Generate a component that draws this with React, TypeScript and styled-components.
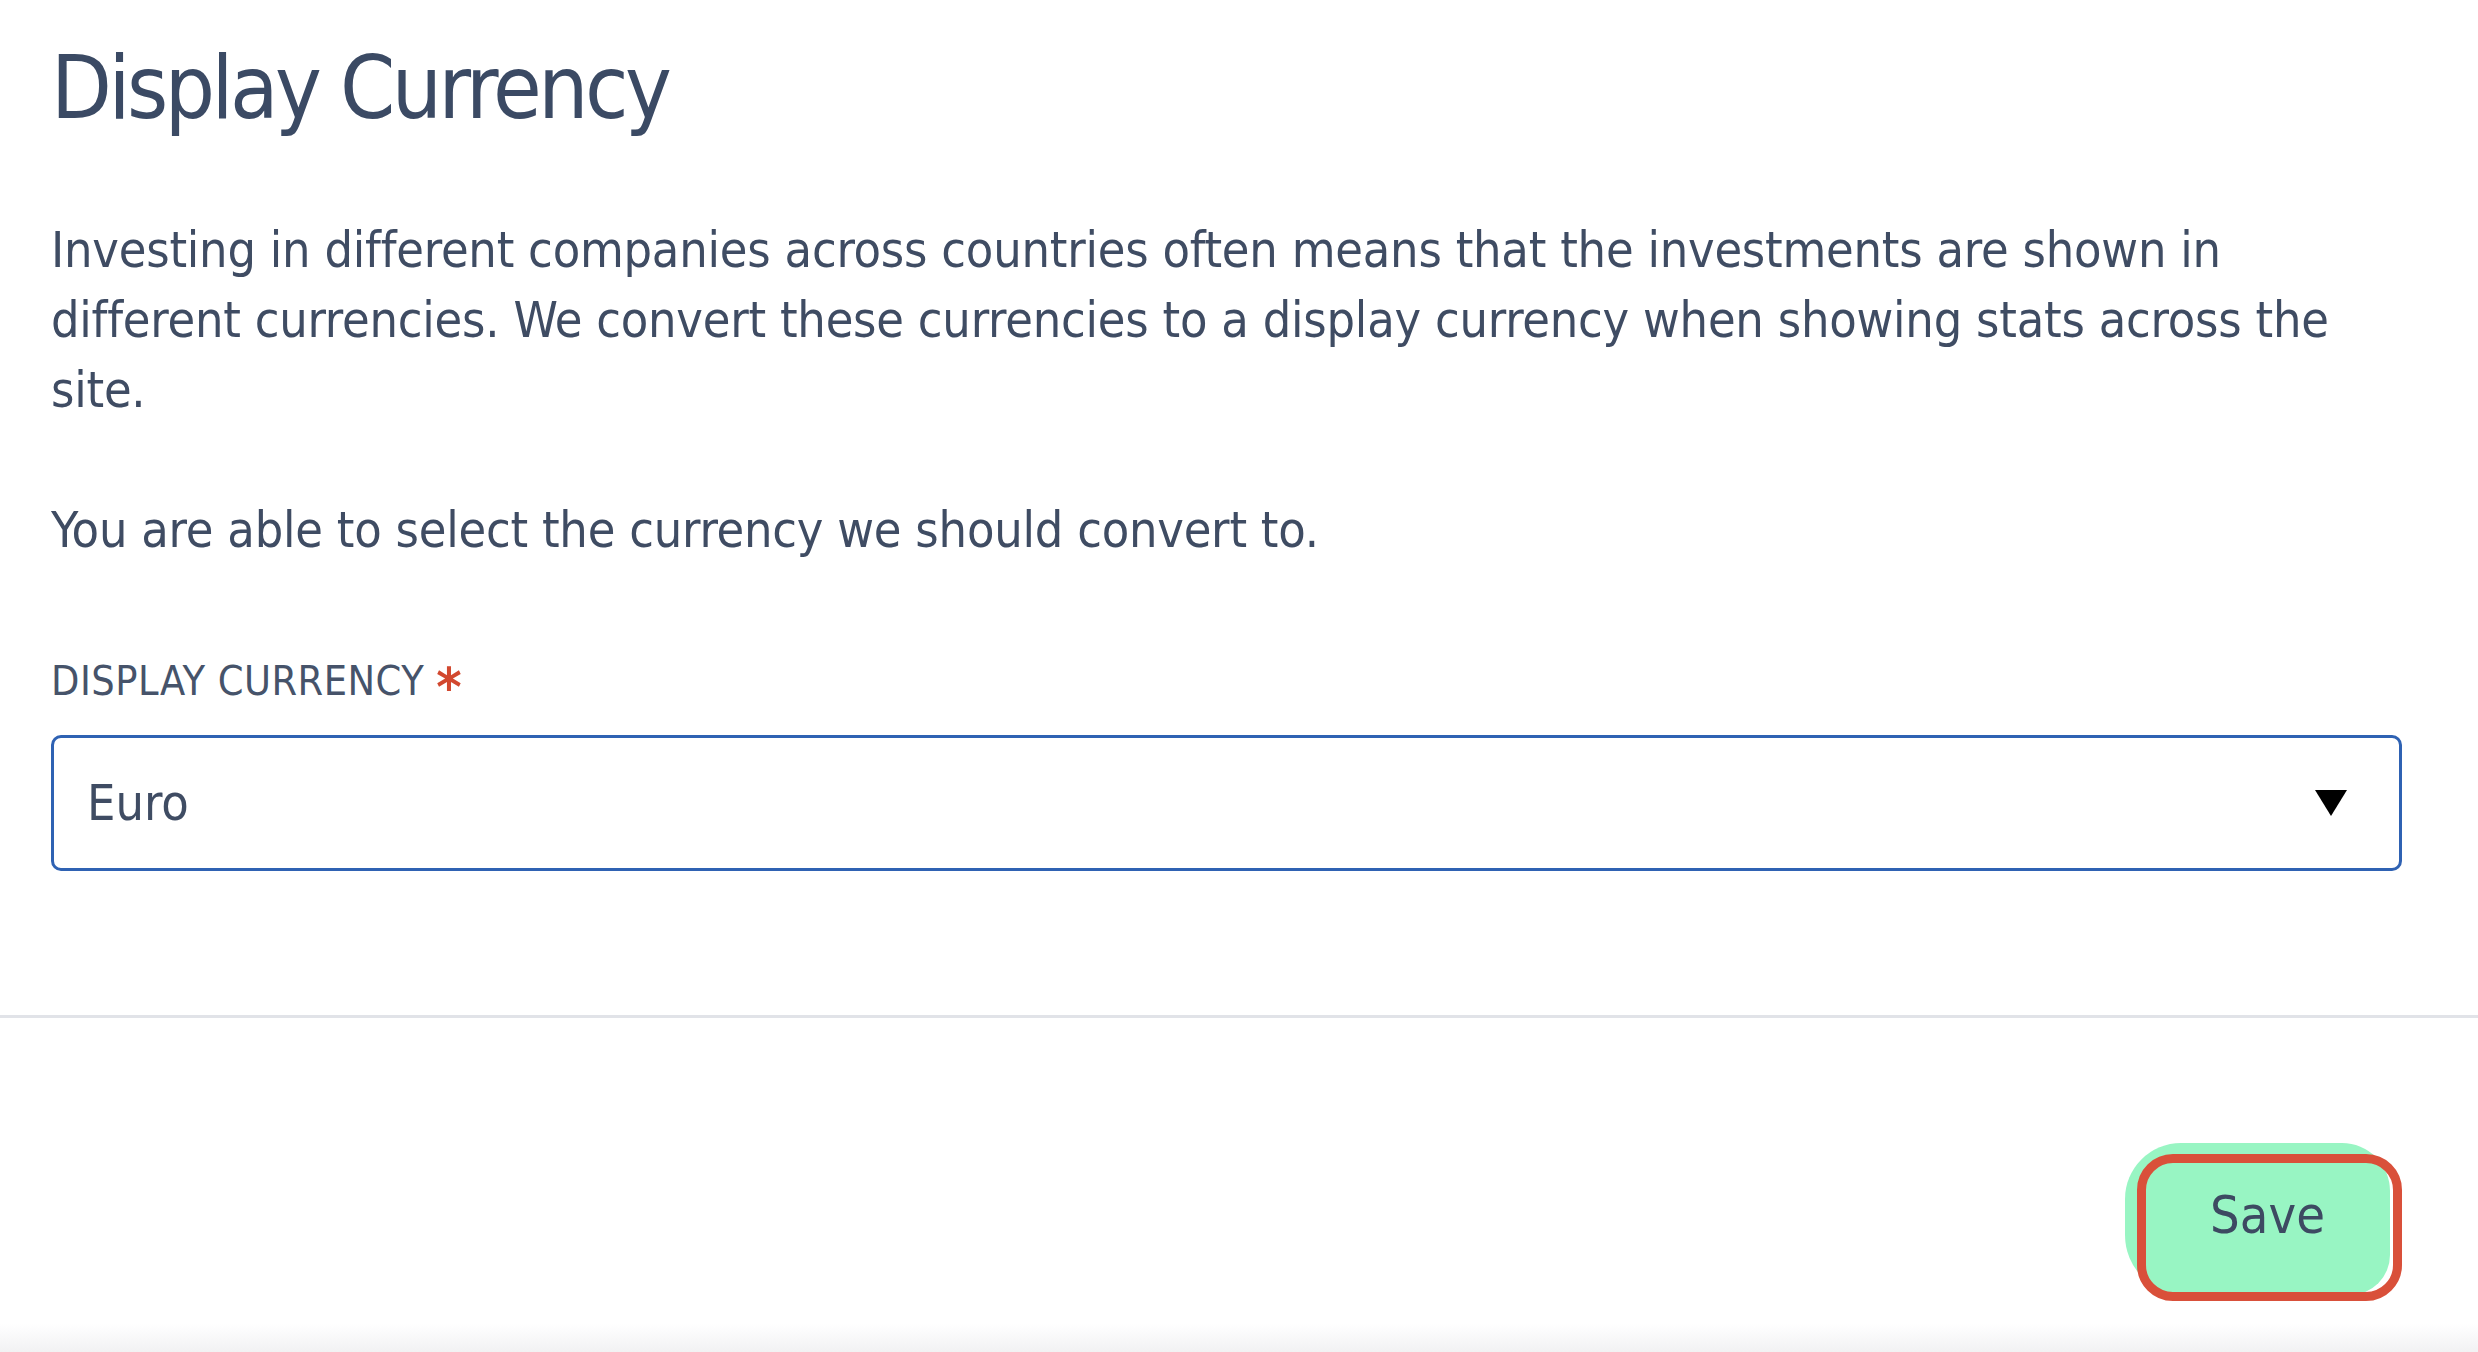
import React from "react";
import styled, { createGlobalStyle } from "styled-components";

const Global = createGlobalStyle`
  html, body { margin: 0; padding: 0; background: #ffffff; }
  body { font-family: "DejaVu Sans Condensed", "Liberation Sans Narrow", Roboto, sans-serif; color: #3d4a62; }
  * { box-sizing: border-box; }
`;

const Page = styled.div`
  position: relative;
  width: 2478px;
  height: 1352px;
  overflow: hidden;
  display: flex;
  flex-direction: column;
  background: #fff;
`;

const Content = styled.div`
  padding: 33px 76px 0 51px;
`;

const Title = styled.h1`
  margin: 0;
  font-size: 88px;
  font-weight: 400;
  line-height: 110px;
  letter-spacing: -3.5px;
  color: #3b4a64;
`;

const Body = styled.div`
  margin-top: 72px;
`;

const Paragraph = styled.p`
  margin: 0;
  font-size: 50px;
  line-height: 70px;
  letter-spacing: -0.22px;
  color: #3f4c63;
  & + & { margin-top: 70px; }
`;

const Field = styled.div`
  margin-top: 90px;
  display: flex;
  flex-direction: column;
  gap: 28px;
`;

const Label = styled.label`
  font-size: 41px;
  line-height: 52px;
  letter-spacing: 0.5px;
  color: #46536a;
  display: flex;
  align-items: baseline;
`;

const Required = styled.span`
  color: #d2482f;
  margin-left: 12px;
  font-size: 54px;
  font-weight: 700;
  line-height: 40px;
  transform: translateY(11px);
`;

const Select = styled.div`
  height: 136px;
  border: 3px solid #2f62b3;
  border-radius: 10px;
  display: flex;
  align-items: center;
  justify-content: space-between;
  padding: 0 52px 0 33px;
  font-size: 50px;
  color: #3f4c63;
`;

const Caret = styled.svg`
  width: 32px;
  height: 26px;
`;

const Divider = styled.div`
  margin-top: 144px;
  height: 3px;
  background: #e1e3e8;
`;

const Footer = styled.div`
  display: flex;
  justify-content: flex-end;
  padding: 125px 88px 0 0;
`;

const SaveWrap = styled.div`
  position: relative;
`;

const SaveButton = styled.button`
  width: 265px;
  height: 152px;
  border: none;
  border-radius: 56px 48px 40px 60px;
  background: #98f5c3;
  font-family: inherit;
  font-size: 52px;
  color: #3d4a62;
  padding: 0 0 8px 20px;
  cursor: pointer;
`;

const Highlight = styled.div`
  position: absolute;
  left: 12px;
  top: 11px;
  width: 265px;
  height: 147px;
  border: 9px solid #d9503a;
  border-radius: 36px;
  pointer-events: none;
`;

const BottomFade = styled.div`
  position: absolute;
  left: 0;
  right: 0;
  bottom: 0;
  height: 28px;
  background: linear-gradient(to bottom, rgba(240,240,242,0), rgba(238,238,240,0.8));
`;

export default function App() {
  return (
    <>
      <Global />
      <Page>
        <Content>
          <Title>Display Currency</Title>
          <Body>
            <Paragraph>
              Investing in different companies across countries often means that the investments are shown in
              different currencies. We convert these currencies to a display currency when showing stats across the
              site.
            </Paragraph>
            <Paragraph>You are able to select the currency we should convert to.</Paragraph>
          </Body>
          <Field>
            <Label>
              DISPLAY CURRENCY<Required>*</Required>
            </Label>
            <Select>
              <span>Euro</span>
              <Caret viewBox="0 0 32 26">
                <path d="M0 0 H32 L16 26 Z" fill="#000" />
              </Caret>
            </Select>
          </Field>
        </Content>
        <Divider />
        <Footer>
          <SaveWrap>
            <SaveButton>Save</SaveButton>
            <Highlight />
          </SaveWrap>
        </Footer>
        <BottomFade />
      </Page>
    </>
  );
}
